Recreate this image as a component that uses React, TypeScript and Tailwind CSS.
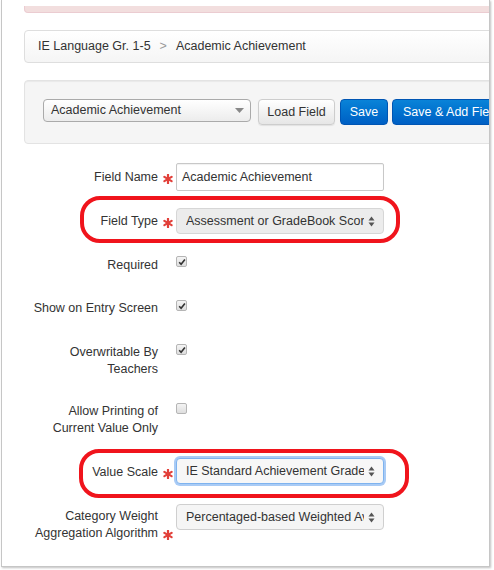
import React from "react";

function Star() {
  return (
    <span className="inline-block w-[18px] mr-[-18px] pl-[5px] text-left align-[-1px]">
      <svg width="10" height="10" viewBox="0 0 10 10" className="inline-block">
        <g stroke="#e2403a" strokeWidth="2.2" strokeLinecap="round">
          <line x1="5" y1="0.8" x2="5" y2="9.2" />
          <line x1="1.4" y1="2.9" x2="8.6" y2="7.1" />
          <line x1="1.4" y1="7.1" x2="8.6" y2="2.9" />
        </g>
      </svg>
    </span>
  );
}

function UpDown() {
  return (
    <svg width="7" height="11" viewBox="0 0 7 11" className="shrink-0">
      <path d="M3.5 0.5 L6.5 4.5 L0.5 4.5 Z" fill="#555" />
      <path d="M3.5 10.5 L6.5 6.5 L0.5 6.5 Z" fill="#555" />
    </svg>
  );
}

function MacSelect({
  value,
  focused,
  darker,
}: {
  value: string;
  focused?: boolean;
  darker?: boolean;
}) {
  return (
    <div
      className={`flex h-[26px] w-[208px] items-center justify-between rounded-[4px] border pl-[9px] pr-[8px] ${
        focused
          ? "border-[#7eb3ef] bg-[#f7f7f7] shadow-[0_0_0_2px_#a9cbf5]"
          : darker
          ? "border-[#d6d6d6] bg-[#ececec]"
          : "border-[#cfcfcf] bg-[#f5f5f5]"
      }`}
    >
      <span className="w-[178px] shrink-0 overflow-hidden whitespace-nowrap">{value}</span>
      <UpDown />
    </div>
  );
}

function Check({ checked }: { checked: boolean }) {
  return (
    <div className="flex h-[11px] w-[11px] items-center justify-center rounded-[2px] border border-[#b5b5b5] bg-gradient-to-b from-[#f4f4f4] to-[#dedede]">
      {checked && (
        <svg width="8" height="8" viewBox="0 0 8 8">
          <path d="M1.2 4.3 L3.1 6.3 L6.9 1.4" fill="none" stroke="#333" strokeWidth="1.6" />
        </svg>
      )}
    </div>
  );
}

function Row({
  height,
  pt,
  label,
  star,
  children,
  outline,
}: {
  height: string;
  pt: string;
  label: React.ReactNode;
  star?: boolean;
  children: React.ReactNode;
  outline?: string;
}) {
  return (
    <div className={`relative flex items-start ${height}`}>
      <div className={`w-[156px] text-right leading-[17px] ${pt}`}>
        {label}
        {star && <Star />}
      </div>
      <div className="ml-[18px]">{children}</div>
      {outline && (
        <div className={`pointer-events-none absolute rounded-[20px] border-[4px] border-[#f0141c] ${outline}`} />
      )}
    </div>
  );
}

export default function App() {
  return (
    <div className="h-[570px] w-[494px] bg-white font-['Helvetica_Neue','Liberation_Sans',Arial,sans-serif] text-[12.5px] text-[#333]">
      <div className="ml-[1px] h-[567px] w-[489px] overflow-hidden border-x border-b border-[#c6c6c6] shadow-[1px_1px_2px_rgba(0,0,0,0.25)]">
        <div className="w-[560px]">
          <div className="ml-[22px] mt-[6px] h-[7px] rounded-b-[4px] border border-t-0 border-[#ebccd1] bg-[#f2dede]" />

          <div className="ml-[22px] mt-[17px] flex h-[33px] items-center rounded-[4px] border border-[#dedede] bg-gradient-to-b from-white to-[#f5f5f5] pl-[13px]">
            <span>IE Language Gr. 1-5</span>
            <span className="mx-[9px] text-[#999]">&gt;</span>
            <span>Academic Achievement</span>
          </div>

          <div className="ml-[22px] mt-[17px] flex h-[64px] items-start rounded-[4px] border border-[#e3e3e3] bg-[#f5f5f5] pl-[18px] pt-[18px] shadow-[inset_0_1px_1px_rgba(0,0,0,0.05)]">
            <div className="flex h-[23px] w-[208px] items-center justify-between rounded-[4px] border border-[#aaa] bg-gradient-to-b from-white to-[#ececec] pl-[7px] pr-[6px]">
              <span>Academic Achievement</span>
              <svg width="9" height="5" viewBox="0 0 9 5">
                <path d="M0 0 L9 0 L4.5 5 Z" fill="#888" />
              </svg>
            </div>
            <div className="ml-[7px] flex h-[26px] w-[77px] items-center justify-center rounded-[4px] border border-[#cdcdcd] bg-gradient-to-b from-white to-[#e6e6e6] shadow-[0_1px_1px_rgba(0,0,0,0.08)]">
              Load Field
            </div>
            <div className="ml-[5px] flex h-[26px] w-[48px] items-center justify-center rounded-[4px] border border-[#0055b3] bg-gradient-to-b from-[#0a83d8] to-[#005fc4] text-white">
              Save
            </div>
            <div className="ml-[4px] flex h-[26px] items-center whitespace-nowrap rounded-[4px] border border-[#0055b3] bg-gradient-to-b from-[#0a83d8] to-[#005fc4] px-[10px] text-white">
              Save &amp; Add Field
            </div>
          </div>

          <div className="mt-[19px]">
            <Row height="h-[45px]" pt="pt-[6px]" label="Field Name" star>
              <div className="flex h-[28px] w-[208px] items-center rounded-[2px] border border-[#c8c8c8] bg-white pl-[5px] shadow-[inset_0_1px_1px_rgba(0,0,0,0.06)]">
                Academic Achievement
              </div>
            </Row>
            <Row
              height="h-[42px]"
              pt="pt-[5px]"
              label="Field Type"
              star
              outline="left-[78px] top-[-12px] h-[47px] w-[320px]"
            >
              <MacSelect value="Assessment or GradeBook Score" darker />
            </Row>
            <Row height="h-[43px]" pt="pt-[7px]" label="Required">
              <div className="mt-[6px]">
                <Check checked />
              </div>
            </Row>
            <Row height="h-[44px]" pt="pt-[7px]" label="Show on Entry Screen">
              <div className="mt-[7px]">
                <Check checked />
              </div>
            </Row>
            <Row
              height="h-[59px]"
              pt="pt-[7px]"
              label={
                <>
                  Overwritable By
                  <br />
                  Teachers
                </>
              }
            >
              <div className="mt-[7px]">
                <Check checked />
              </div>
            </Row>
            <Row
              height="h-[62px]"
              pt="pt-[7px]"
              label={
                <>
                  Allow Printing of
                  <br />
                  Current Value Only
                </>
              }
            >
              <div className="mt-[7px]">
                <Check checked={false} />
              </div>
            </Row>
            <Row
              height="h-[46px]"
              pt="pt-[6px]"
              label="Value Scale"
              star
              outline="left-[77px] top-[-9px] h-[49px] w-[330px]"
            >
              <MacSelect value="IE Standard Achievement Grade" focused />
            </Row>
            <Row
              height="h-[60px]"
              pt="pt-[4px]"
              label={
                <>
                  Category Weight
                  <br />
                  Aggregation Algorithm
                </>
              }
              star
            >
              <MacSelect value="Percentaged-based Weighted Average" />
            </Row>
          </div>
        </div>
      </div>
    </div>
  );
}
